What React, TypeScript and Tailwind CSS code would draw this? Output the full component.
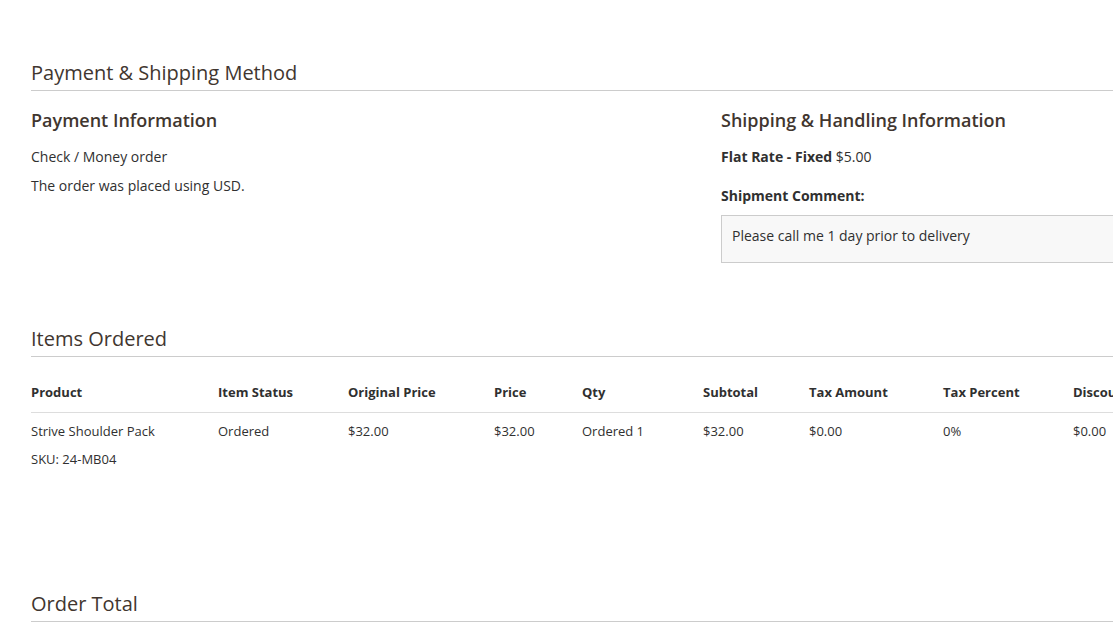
const font = { fontFamily: '"Open Sans", "Liberation Sans", sans-serif' };

const SectionTitle = ({ children }: { children: React.ReactNode }) => {
  return (
    <div className="border-b border-[#cccccc] pt-[1px] pb-[3px]">
      <h2 className="text-[20px] leading-[28px] text-[#41362f]">{children}</h2>
    </div>
  );
};

const columns = [
  { name: "Product", w: "w-[187px]" },
  { name: "Item Status", w: "w-[130px]" },
  { name: "Original Price", w: "w-[146px]" },
  { name: "Price", w: "w-[88px]" },
  { name: "Qty", w: "w-[121px]" },
  { name: "Subtotal", w: "w-[106px]" },
  { name: "Tax Amount", w: "w-[134px]" },
  { name: "Tax Percent", w: "w-[130px]" },
  { name: "Discount Amount", w: "w-[150px]" },
  { name: "Row Total", w: "w-[120px]" },
];

const row = ["Ordered", "$32.00", "$32.00", "Ordered 1", "$32.00", "$0.00", "0%", "$0.00", "$32.00"];

const App = () => {
  return (
    <main className="h-screen w-screen overflow-hidden bg-white text-[#303030]" style={font}>
      <div className="ml-[31px] w-[1380px] pt-[58px]">
        {/* payment & shipping */}
        <section>
          <SectionTitle>Payment &amp; Shipping Method</SectionTitle>
          <div className="flex">
            <div className="w-1/2">
              <h3 className="mt-[17px] text-[18px] leading-[24px] font-semibold text-[#41362f]">Payment Information</h3>
              <p className="mt-[15px] text-[14px] leading-[20px]">Check / Money order</p>
              <p className="mt-[9px] text-[14px] leading-[20px]">The order was placed using USD.</p>
            </div>
            <div className="w-1/2">
              <h3 className="mt-[17px] text-[18px] leading-[24px] font-semibold text-[#41362f]">Shipping &amp; Handling Information</h3>
              <p className="mt-[15px] text-[14px] leading-[20px]">
                <strong className="font-bold">Flat Rate - Fixed</strong> $5.00
              </p>
              <p className="mt-[19px] text-[14px] leading-[20px] font-bold">Shipment Comment:</p>
              <div className="mt-[9px] border border-[#cccccc] bg-[#f8f8f8] px-[10px] pt-[10px] pb-[16px] text-[14px] leading-[20px]">
                Please call me 1 day prior to delivery
              </div>
            </div>
          </div>
        </section>

        {/* items ordered */}
        <section className="mt-[61px]">
          <SectionTitle>Items Ordered</SectionTitle>
          <table className="mt-[25px] table-fixed border-collapse text-left">
            <thead>
              <tr className="border-b border-[#dddddd]">
                {columns.map((c) => (
                  <th key={c.name} className={`${c.w} pb-[10px] text-[13px] leading-[20px] font-bold`}>
                    {c.name}
                  </th>
                ))}
              </tr>
            </thead>
            <tbody>
              <tr className="align-top">
                <td className="pt-[8px] text-[13px] leading-[20px]">
                  <div>Strive Shoulder Pack</div>
                  <div className="mt-[8px]">SKU: 24-MB04</div>
                </td>
                {row.map((v, i) => (
                  <td key={i} className="pt-[8px] text-[13px] leading-[20px]">{v}</td>
                ))}
              </tr>
            </tbody>
          </table>
        </section>

        {/* order total */}
        <section className="mt-[120px]">
          <SectionTitle>Order Total</SectionTitle>
        </section>
      </div>
    </main>
  );
};

export default App;
